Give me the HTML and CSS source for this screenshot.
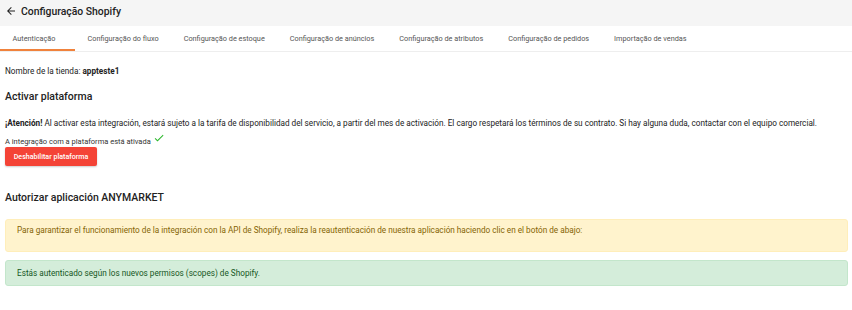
FILE: index.html
```html
<!DOCTYPE html>
<html lang="es">
<head>
<meta charset="utf-8">
<title>Configuração Shopify</title>
<link rel="stylesheet" href="styles.css">
</head>
<body>
<header class="topbar">
  <svg class="back" viewBox="0 0 24 24" width="12" height="12"><path d="M20 11H7.83l5.59-5.59L12 4l-8 8 8 8 1.41-1.41L7.83 13H20v-2z" fill="#222"/></svg>
  <h1 class="title">Configuração Shopify</h1>
</header>
<nav class="tabs">
  <a class="tab active">Autenticação</a>
  <a class="tab">Configuração do fluxo</a>
  <a class="tab">Configuração de estoque</a>
  <a class="tab">Configuração de anúncios</a>
  <a class="tab">Configuração de atributos</a>
  <a class="tab">Configuração de pedidos</a>
  <a class="tab">Importação de vendas</a>
</nav>
<main class="content">
  <p class="store">Nombre de la tienda: <strong>appteste1</strong></p>
  <h2 class="section-title first">Activar plataforma</h2>
  <p class="notice"><strong>¡Atención!</strong> Al activar esta integración, estará sujeto a la tarifa de disponibilidad del servicio, a partir del mes de activación. El cargo respetará los términos de su contrato. Si hay alguna duda, contactar con el equipo comercial.</p>
  <p class="status">A integração com a plataforma está ativada
    <svg class="check" viewBox="0 0 24 24" width="12" height="12"><path d="M9 16.17L4.83 12l-1.42 1.41L9 19 21 7l-1.41-1.41z" fill="#2eb82e"/></svg>
  </p>
  <button class="btn-danger">Deshabilitar plataforma</button>
  <h2 class="section-title second">Autorizar aplicación ANYMARKET</h2>
  <div class="alert alert-warning">Para garantizar el funcionamiento de la integración con la API de Shopify, realiza la reautenticación de nuestra aplicación haciendo clic en el botón de abajo:</div>
  <div class="alert alert-success">Estás autenticado según los nuevos permisos (scopes) de Shopify.</div>
</main>
</body>
</html>
```
FILE: styles.css
```css
* { box-sizing: border-box; }
html, body { margin: 0; padding: 0; background: #fff; }
body { font-family: Roboto, "Noto Sans", sans-serif; color: #222; }

.topbar {
  display: flex;
  align-items: center;
  gap: 4px;
  height: 26px;
  padding: 0 5px 4px;
  background: #f5f5f5;
}
.back { display: block; }
.title { margin: 0; font-size: 10.4px; font-weight: 500; color: #222; }

.tabs {
  display: flex;
  height: 26px;
  border-bottom: 1px solid #eee;
  background: #fff;
}
.tab {
  display: flex;
  align-items: center;
  padding: 1px 12.5px 0;
  font-size: 7.3px;
  color: #555;
  border-bottom: 2px solid transparent;
  white-space: nowrap;
}
.tab.active { border-bottom-color: #f0823c; min-width: 75px; }

.content { padding: 0 4px 0 5px; }
.store { margin: 13px 0 0; font-size: 8.2px; line-height: 12px; color: #222; }
.store strong { font-weight: 700; }
.section-title { margin: 0; font-size: 10.5px; font-weight: 500; color: #222; line-height: 16px; }
.section-title.first { margin-top: 12px; }
.notice { margin: 12px 0 0; font-size: 8.2px; line-height: 12px; color: #222; }
.notice strong { font-weight: 700; }
.status { margin: 3px 0 0; font-size: 7.5px; line-height: 11px; color: #333; display: flex; align-items: flex-end; gap: 2px; }
.check { margin-bottom: 3px; }
.btn-danger {
  display: block;
  margin-top: 0;
  width: 92px;
  height: 19px;
  border: 0;
  border-radius: 2px;
  background: #f44336;
  color: #fff;
  font-family: inherit;
  font-size: 7.1px;
  font-weight: 500;
  padding: 0;
  box-shadow: 0 1px 2px rgba(0,0,0,0.2);
}
.section-title.second { margin-top: 24px; }
.alert {
  border-radius: 3px;
  font-size: 8.2px;
  line-height: 11px;
  padding: 0 11px;
  display: flex;
  align-items: center;
}
.alert-warning { margin-top: 13px; height: 33px; align-items: flex-start; padding-top: 5px; background: #fff3cd; color: #856404; border: 1px solid #ffeeba; }
.alert-success { margin-top: 8px; height: 26px; background: #d4edda; color: #155724; border: 1px solid #c3e6cb; }
```
